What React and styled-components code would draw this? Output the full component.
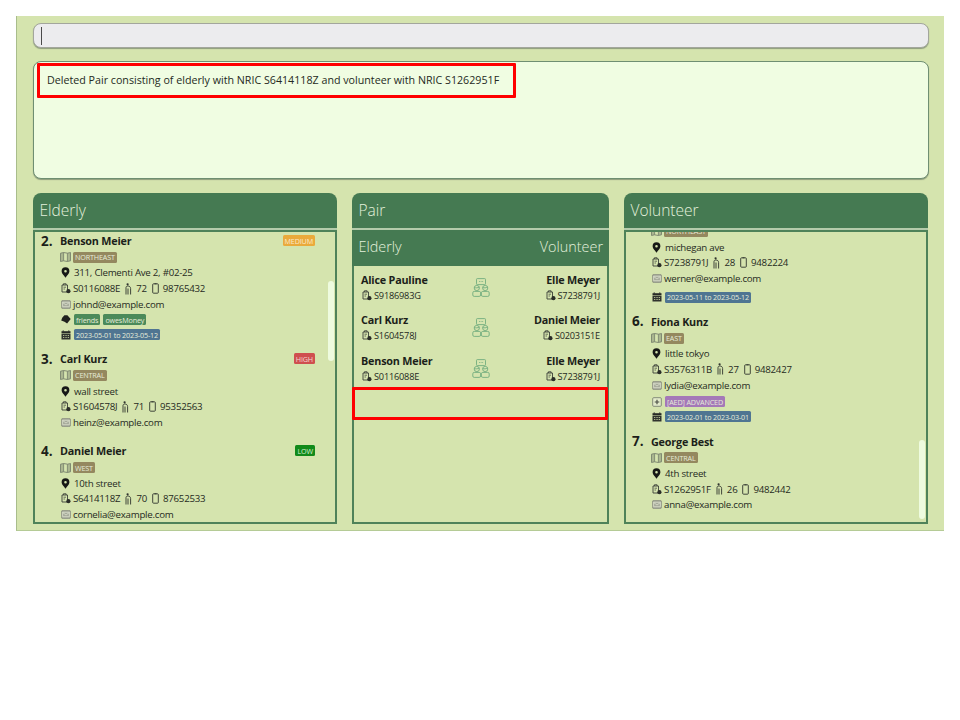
import styled, { createGlobalStyle } from "styled-components";

const GlobalStyle = createGlobalStyle`
  html, body {
    margin: 0;
    padding: 0;
    background: #ffffff;
  }
  * {
    box-sizing: border-box;
  }
`;

const Page = styled.div`
  padding: 16px;
  font-family: "Open Sans", "Noto Sans", sans-serif;
  color: #252a22;
`;

const Window = styled.div`
  width: 928px;
  height: 515px;
  background: #d5e4ae;
  border-left: 1px solid #a9bd8c;
  border-bottom: 1px solid #b5cb96;
  padding: 7px 15px 6px 16px;
  display: flex;
  flex-direction: column;
`;

const CommandBox = styled.div`
  height: 25px;
  flex: none;
  background: #ececee;
  border: 1px solid #a3a69c;
  border-radius: 8px;
  box-shadow: 0 1px 1px #8d9c7c;
  display: flex;
  align-items: center;
  padding-left: 7px;
`;

const Caret = styled.div`
  width: 1px;
  height: 18px;
  background: #4a4a4a;
`;

const ResultBox = styled.div`
  position: relative;
  height: 118px;
  flex: none;
  margin-top: 13px;
  background: #f0fde2;
  border: 1px solid #6f8f72;
  border-radius: 8px;
  box-shadow: 0 1px 1px #8d9c7c;
  padding: 11px 13px;
  font-size: 10.7px;
  line-height: 15px;
`;

const Highlight = styled.div`
  position: absolute;
  left: ${(p) => p.$left}px;
  top: ${(p) => p.$top}px;
  width: ${(p) => p.$width}px;
  height: ${(p) => p.$height}px;
  border: 3px solid #ff0000;
  border-radius: 1px;
  pointer-events: none;
`;

const Columns = styled.div`
  flex: 1;
  min-height: 0;
  margin-top: 14px;
  display: grid;
  grid-template-columns: 304px 257px 304px;
  column-gap: 15px;
`;

const Panel = styled.section`
  display: flex;
  flex-direction: column;
  min-height: 0;
`;

const PanelHeader = styled.header`
  height: 35px;
  flex: none;
  background: #457a52;
  border-radius: 8px 8px 0 0;
  color: #e4f1dc;
  font-size: 15.5px;
  font-weight: 300;
  line-height: 35px;
  padding-left: 6.5px;
`;

const HeaderLine = styled.div`
  height: 2px;
  flex: none;
  background: #b4cbab;
`;

const ListFrame = styled.div`
  position: relative;
  flex: 1;
  min-height: 0;
  overflow: hidden;
  border: 2px solid #4f8259;
  padding-left: 6px;
`;

const ListInner = styled.div`
  margin-top: ${(p) => p.$shift || 0}px;
`;

const Thumb = styled.div`
  position: absolute;
  right: 1px;
  top: ${(p) => p.$top}px;
  width: 6px;
  height: ${(p) => p.$height}px;
  background: #eefbdf;
  border-radius: 3px;
`;

const Card = styled.article`
  display: flex;
  padding: 0.5px 20px 7.2px 0;
`;

const CardNumber = styled.div`
  width: 19px;
  flex: none;
  font-size: 13.5px;
  font-weight: 700;
  line-height: 17px;
  color: #1c1f1a;
`;

const CardBody = styled.div`
  flex: 1;
  min-width: 0;
  display: flex;
  flex-direction: column;
`;

const NameRow = styled.div`
  height: 16px;
  margin-bottom: 0.8px;
  display: flex;
  align-items: center;
  justify-content: space-between;
`;

const Name = styled.div`
  font-size: 10.8px;
  font-weight: 700;
  letter-spacing: -0.2px;
  color: #1c1f1a;
`;

const Row = styled.div`
  height: 15.7px;
  display: flex;
  align-items: center;
  gap: ${(p) => p.$gap ?? 3}px;
  font-size: 9.7px;
  letter-spacing: -0.25px;
  white-space: nowrap;
`;

const BadgeRow = styled(Row)`
  height: 15px;
`;

const SkillRow = styled(BadgeRow)`
  margin-top: 1.5px;
`;

const DateRow = styled(BadgeRow)`
  margin-bottom: 1px;
`;

const EmptyRow = styled.div`
  height: ${(p) => p.$height}px;
`;

const Badge = styled.span`
  display: inline-flex;
  align-items: center;
  height: 11px;
  padding: 0 2px;
  border-radius: 1.5px;
  font-size: 7.2px;
  letter-spacing: -0.15px;
  background: ${(p) => p.$bg};
  color: ${(p) => p.$fg || "#e6ecd9"};
`;

const PairSubHeader = styled.div`
  height: 36px;
  flex: none;
  background: #457a52;
  color: #e4f1dc;
  font-size: 14.4px;
  font-weight: 300;
  display: flex;
  justify-content: space-between;
  line-height: 34px;
  padding: 0 6px 0 6.5px;
`;

const PairList = styled.div`
  position: relative;
  flex: 1;
  min-height: 0;
  border: 2px solid #4f8259;
  border-top: none;
  padding: 1px 7px 0;
`;

const PairRow = styled.div`
  height: 40.5px;
  display: grid;
  grid-template-columns: 1fr 18px 1fr;
  column-gap: 10px;
  align-items: center;
`;

const PairSide = styled.div`
  display: flex;
  flex-direction: column;
  align-items: ${(p) => (p.$right ? "flex-end" : "flex-start")};
`;

const PairName = styled(Name)`
  line-height: 16px;
`;

const PairId = styled.div`
  display: flex;
  align-items: center;
  gap: 2px;
  height: 15px;
  font-size: 9.2px;
  letter-spacing: -0.2px;
`;

const MapIcon = () => (
  <svg width="11" height="10" viewBox="0 0 11 10" fill="none" stroke="#77806c" strokeWidth="0.9">
    <path d="M.5 1.2 3.6.5l3.8.7 3.1-.7v8.3l-3.1.7-3.8-.7-3.1.7zM3.6.5v8.3M7.4 1.2v8.3M2 1v8M9 1v8" />
  </svg>
);

const PinIcon = () => (
  <svg width="9" height="11" viewBox="0 0 9 11" style={{ margin: "0 1px" }}>
    <path
      fillRule="evenodd"
      fill="#161816"
      d="M4.5.3a3.9 3.9 0 0 1 3.9 3.9c0 2.3-2.4 4-3.9 6.5C3 8.2.6 6.5.6 4.2A3.9 3.9 0 0 1 4.5.3zm0 2.6a1.3 1.3 0 1 0 0 2.6 1.3 1.3 0 0 0 0-2.6z"
    />
  </svg>
);

const IdIcon = () => (
  <svg width="10" height="11" viewBox="0 0 10 11" style={{ marginLeft: "1px" }}>
    <path d="M1 2h5.5v7H1zM2.4 2V.8h2.7V2" fill="none" stroke="#3b3f38" strokeWidth="0.9" />
    <path d="M2.5 4.2h2.5M2.5 6H4" stroke="#3b3f38" strokeWidth="0.7" />
    <circle cx="7.4" cy="8.2" r="2.1" fill="#2a2d28" />
  </svg>
);

const AgeIcon = () => (
  <svg width="7" height="12" viewBox="0 0 7 12" style={{ margin: "0 2px 0 3px" }} fill="none" stroke="#2f332d" strokeWidth="0.9">
    <circle cx="2.6" cy="1.3" r="1.1" fill="#2f332d" stroke="none" />
    <path d="M1 11.5v-7C1 3.500 1.800 3 3 3s2.600.8 2.600 2.500v6M3 5.500v6" />
  </svg>
);

const PhoneIcon = () => (
  <svg width="7" height="11" viewBox="0 0 7 11" style={{ margin: "0 2px 0 3px" }} fill="none" stroke="#30342e" strokeWidth="0.9">
    <rect x="0.7" y="0.8" width="5.6" height="9.4" rx="0.8" />
    <path d="M2.5.8h2" />
  </svg>
);

const MailIcon = () => (
  <svg width="10" height="9" viewBox="0 0 10 9" style={{ marginLeft: "1px" }}>
    <rect x="0.3" y="0.3" width="9.4" height="8.4" rx="2" fill="#a6aa9b" stroke="#7d8274" strokeWidth="0.6" />
    <path d="M1.600 2.300h6.800v4.400H1.600zM1.600 2.500 5 5l3.400-2.500" fill="none" stroke="#e2e6d3" strokeWidth="0.7" />
  </svg>
);

const TagIcon = () => (
  <svg width="10" height="9" viewBox="0 0 10 9" style={{ marginLeft: "1px" }}>
    <path d="M3.4.3h3l3.300 3.600-3.600 4.500-2.600-1.700L.2 5.400l1-2.600z" fill="#1f221d" />
  </svg>
);

const CalendarIcon = () => (
  <svg width="10" height="10" viewBox="0 0 10 10" style={{ marginLeft: "1px" }}>
    <path d="M.5 1.200h9V3H.5z" fill="#262925" />
    <path d="M2.200.3v1.500M7.800.3v1.500" stroke="#262925" strokeWidth="0.9" />
    <path
      fillRule="evenodd"
      fill="#30332e"
      d="M.5 3.500h9v6h-9zM2 5v.8h1.300V5zm2.400 0v.8h1.300V5zm2.300 0v.8H8V5zM2 7v.8h1.300V7zm2.400 0v.8h1.300V7zm2.300 0v.8H8V7z"
    />
  </svg>
);

const AedIcon = () => (
  <svg width="10" height="10" viewBox="0 0 10 10" style={{ marginLeft: "1px" }}>
    <rect x="0.7" y="0.7" width="8.6" height="8.6" rx="1" fill="#e3ebcb" stroke="#6f7569" strokeWidth="0.8" />
    <path d="M5 2.700v4.600M2.700 5h4.600" stroke="#4b5047" strokeWidth="1.2" />
  </svg>
);

const PairIcon = () => (
  <svg width="18" height="19" viewBox="0 0 18 19" fill="none" stroke="#72ad7e" strokeWidth="0.9">
    <rect x="4.5" y="0.6" width="9" height="6" rx="0.8" />
    <path d="M7 3.500h.8M8.700 3.500h.8M10.300 3.500h.8" />
    <circle cx="4.800" cy="10" r="2.600" />
    <circle cx="13.200" cy="10" r="2.600" />
    <path d="M2.400 9.500c1.500.6 3 .4 4.800-.4M10.800 9.500c1.500.6 3 .4 4.800-.4" />
    <rect x="0.8" y="13.400" width="7.800" height="5" rx="1.400" />
    <rect x="9.400" y="13.400" width="7.800" height="5" rx="1.400" />
  </svg>
);

const REGION = "#94885f";
const TAG = "#4b8a5a";
const DATE = "#4f7592";
const AED = "#a478b8";

const PRIORITY = {
  MEDIUM: { bg: "#eaaa3c", fg: "#fbe9c8" },
  HIGH: { bg: "#cf4f4f", fg: "#f6d6cf" },
  LOW: { bg: "#118a1a", fg: "#d6efcf" },
};

const elderly = [
  {
    no: 2,
    name: "Benson Meier",
    priority: "MEDIUM",
    region: "NORTHEAST",
    address: "311, Clementi Ave 2, #02-25",
    nric: "S0116088E",
    age: 72,
    phone: "98765432",
    email: "johnd@example.com",
    tags: ["friends", "owesMoney"],
    dates: "2023-05-01 to 2023-05-12",
  },
  {
    no: 3,
    name: "Carl Kurz",
    priority: "HIGH",
    region: "CENTRAL",
    address: "wall street",
    nric: "S1604578J",
    age: 71,
    phone: "95352563",
    email: "heinz@example.com",
  },
  {
    no: 4,
    name: "Daniel Meier",
    priority: "LOW",
    region: "WEST",
    address: "10th street",
    nric: "S6414118Z",
    age: 70,
    phone: "87652533",
    email: "cornelia@example.com",
  },
];

// the first volunteer is scrolled past its name, so only the rows below it show
const volunteers = [
  {
    no: 5,
    scrolled: true,
    region: "NORTHEAST",
    address: "michegan ave",
    nric: "S7238791J",
    age: 28,
    phone: "9482224",
    email: "werner@example.com",
    dates: "2023-05-11 to 2023-05-12",
  },
  {
    no: 6,
    name: "Fiona Kunz",
    region: "EAST",
    address: "little tokyo",
    nric: "S3576311B",
    age: 27,
    phone: "9482427",
    email: "lydia@example.com",
    skill: "[AED] ADVANCED",
    dates: "2023-02-01 to 2023-03-01",
  },
  {
    no: 7,
    name: "George Best",
    region: "CENTRAL",
    address: "4th street",
    nric: "S1262951F",
    age: 26,
    phone: "9482442",
    email: "anna@example.com",
  },
];

const pairs = [
  { left: "Alice Pauline", leftId: "S9186983G", right: "Elle Meyer", rightId: "S7238791J" },
  { left: "Carl Kurz", leftId: "S1604578J", right: "Daniel Meier", rightId: "S0203151E" },
  { left: "Benson Meier", leftId: "S0116088E", right: "Elle Meyer", rightId: "S7238791J" },
];

const PersonCard = ({ person }) => (
  <Card>
    <CardNumber>{!person.scrolled && `${person.no}.`}</CardNumber>
    <CardBody>
      {!person.scrolled && (
        <NameRow>
          <Name>{person.name}</Name>
          {person.priority && (
            <Badge $bg={PRIORITY[person.priority].bg} $fg={PRIORITY[person.priority].fg}>
              {person.priority}
            </Badge>
          )}
        </NameRow>
      )}
      <Row $gap={2}>
        <MapIcon />
        <Badge $bg={REGION}>{person.region}</Badge>
      </Row>
      <Row>
        <PinIcon />
        {person.address}
      </Row>
      <Row $gap={2}>
        <IdIcon />
        {person.nric}
        <AgeIcon />
        {person.age}
        <PhoneIcon />
        {person.phone}
      </Row>
      <Row $gap={2}>
        <MailIcon />
        {person.email}
      </Row>
      {person.tags && (
        <BadgeRow>
          <TagIcon />
          {person.tags.map((tag) => (
            <Badge key={tag} $bg={TAG}>
              {tag}
            </Badge>
          ))}
        </BadgeRow>
      )}
      {person.skill && (
        <SkillRow>
          <AedIcon />
          <Badge $bg={AED}>{person.skill}</Badge>
        </SkillRow>
      )}
      {!person.tags && !person.skill && <EmptyRow $height={3.5} />}
      {person.dates ? (
        <DateRow>
          <CalendarIcon />
          <Badge $bg={DATE}>{person.dates}</Badge>
        </DateRow>
      ) : (
        <EmptyRow $height={1.5} />
      )}
    </CardBody>
  </Card>
);

const PairItem = ({ pair }) => (
  <PairRow>
    <PairSide>
      <PairName>{pair.left}</PairName>
      <PairId>
        <IdIcon />
        {pair.leftId}
      </PairId>
    </PairSide>
    <PairIcon />
    <PairSide $right>
      <PairName>{pair.right}</PairName>
      <PairId>
        <IdIcon />
        {pair.rightId}
      </PairId>
    </PairSide>
  </PairRow>
);

export default function App() {
  return (
    <Page>
      <GlobalStyle />
      <Window>
        <CommandBox>
          <Caret />
        </CommandBox>
        <ResultBox>
          Deleted Pair consisting of elderly with NRIC S6414118Z and volunteer with NRIC S1262951F
          <Highlight $left={3} $top={1} $width={479} $height={35} />
        </ResultBox>
        <Columns>
          <Panel>
            <PanelHeader>Elderly</PanelHeader>
            <HeaderLine />
            <ListFrame>
              <ListInner>
                {elderly.map((person) => (
                  <PersonCard key={person.no} person={person} />
                ))}
              </ListInner>
              <Thumb $top={49} $height={80} />
            </ListFrame>
          </Panel>
          <Panel>
            <PanelHeader>Pair</PanelHeader>
            <HeaderLine />
            <PairSubHeader>
              <span>Elderly</span>
              <span>Volunteer</span>
            </PairSubHeader>
            <PairList>
              {pairs.map((pair) => (
                <PairItem key={pair.left} pair={pair} />
              ))}
              <Highlight $left={-2} $top={121} $width={256} $height={33} />
            </PairList>
          </Panel>
          <Panel>
            <PanelHeader>Volunteer</PanelHeader>
            <HeaderLine />
            <ListFrame>
              <ListInner $shift={-9}>
                {volunteers.map((person) => (
                  <PersonCard key={person.no} person={person} />
                ))}
              </ListInner>
              <Thumb $top={208} $height={79} />
            </ListFrame>
          </Panel>
        </Columns>
      </Window>
    </Page>
  );
}
